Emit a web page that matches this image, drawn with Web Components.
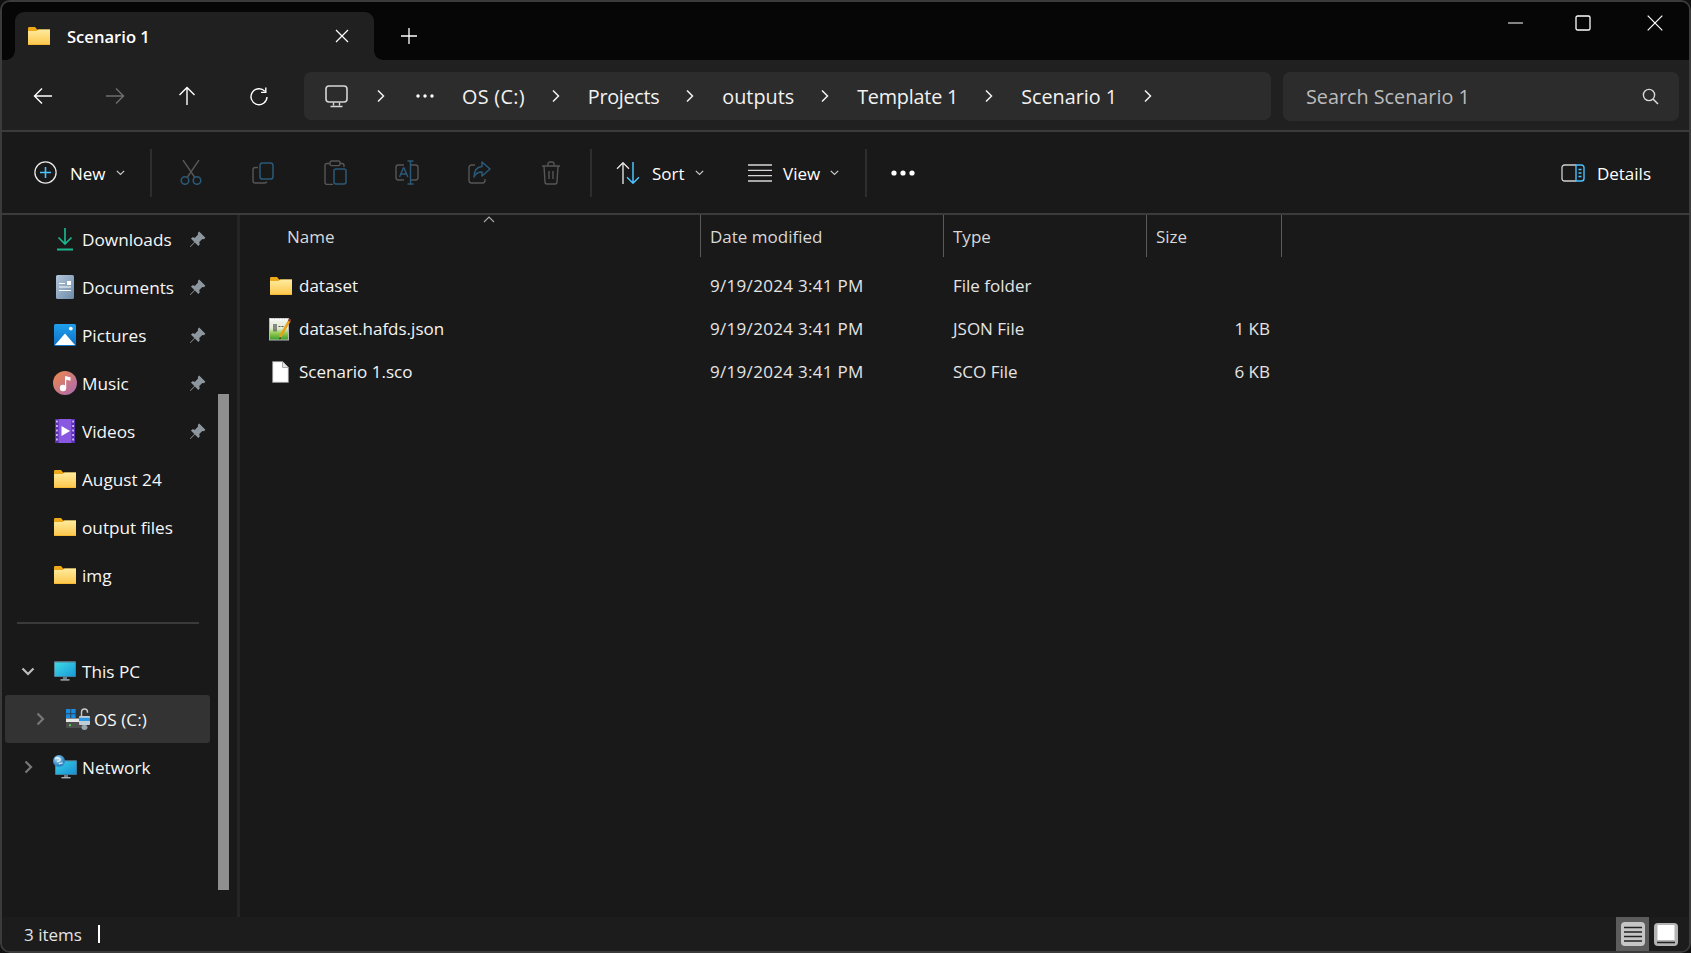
<!DOCTYPE html>
<html lang="en">
<head>
<meta charset="utf-8">
<title>Scenario 1 - File Explorer</title>
<style>
  html, body { margin: 0; height: 100%; background: #101010; }
  body { font-family: "Open Sans", "Noto Sans", sans-serif; font-size: 17px; color: #fff; overflow: hidden; }
</style>
</head>
<body>
<explorer-window>
  <tab-bar></tab-bar>
  <nav-bar>
    <path-crumb style="letter-spacing:.3px">OS (C:)</path-crumb>
    <path-crumb style="letter-spacing:-.3px">Projects</path-crumb>
    <path-crumb>outputs</path-crumb>
    <path-crumb style="letter-spacing:-.2px">Template 1</path-crumb>
    <path-crumb>Scenario 1</path-crumb>
  </nav-bar>
  <tool-bar></tool-bar>
  <main-area>
    <nav-pane slot="nav">
      <nav-item icon="download" pin>Downloads</nav-item>
      <nav-item icon="documents" pin>Documents</nav-item>
      <nav-item icon="pictures" pin>Pictures</nav-item>
      <nav-item icon="music" pin>Music</nav-item>
      <nav-item icon="videos" pin>Videos</nav-item>
      <nav-item icon="folder">August 24</nav-item>
      <nav-item icon="folder">output files</nav-item>
      <nav-item icon="folder">img</nav-item>
      <nav-divider></nav-divider>
      <nav-item icon="pc" chevron="down">This PC</nav-item>
      <nav-item icon="drive" chevron="right" level="1" selected>OS (C:)</nav-item>
      <nav-item icon="network" chevron="right">Network</nav-item>
    </nav-pane>
    <file-list slot="files">
      <file-row icon="folder" date="9/19/2024 3:41 PM" type="File folder" size="">dataset</file-row>
      <file-row icon="json" date="9/19/2024 3:41 PM" type="JSON File" size="1 KB">dataset.hafds.json</file-row>
      <file-row icon="sco" date="9/19/2024 3:41 PM" type="SCO File" size="6 KB">Scenario 1.sco</file-row>
    </file-list>
  </main-area>
  <status-bar></status-bar>
</explorer-window>

<script>
// shared colours for the greyed out toolbar icons
const DIM = "#565656";
const DIMBLUE = "#2b5a78";
const BLUE = "#4cc2ff";

const ICONS = {
  folder: [22, 18, `<defs><linearGradient id="g" x1="0" y1="0" x2="0" y2="1"><stop offset="0" stop-color="#ffeb9f"/><stop offset="1" stop-color="#fcc84e"/></linearGradient></defs>
    <path d="M0 1.2A1.2 1.2 0 0 1 1.2 0H7l2.2 2.4H22V18H0z" fill="#eea91a"/>
    <path d="M0 4H8.5L10.5 2.6H22V16.8a.8.8 0 0 1-.8.6H.8a.8.8 0 0 1-.8-.6z" fill="url(#g)"/>`],
  download: [18, 24, `<path d="M9 1V17M2.5 10.5 9 17l6.5-6.5" fill="none" stroke="#1db58d" stroke-width="1.7"/><path d="M1 22.5H17" stroke="#1db58d" stroke-width="2"/>`],
  documents: [18, 24, `<defs><linearGradient id="g" x1="0" y1="0" x2="1" y2="1"><stop offset="0" stop-color="#b4c6d9"/><stop offset="1" stop-color="#6c8ba9"/></linearGradient></defs>
    <rect width="18" height="24" rx="1.5" fill="url(#g)"/><path d="M3 8.5H9M3 12H15M3 15.5H15" stroke="#fff" stroke-width="1.1"/><rect x="11" y="6" width="4" height="4" fill="#fff"/>`],
  pictures: [22, 22, `<defs><linearGradient id="g" x1="0" y1="0" x2="0" y2="1"><stop offset="0" stop-color="#1f9fec"/><stop offset="1" stop-color="#0f70c6"/></linearGradient></defs>
    <rect width="22" height="22" rx="1.5" fill="url(#g)"/><circle cx="16.8" cy="4.6" r="1.9" fill="#fff"/><path d="M1 21 11 9.5 21 21z" fill="#fff"/>`],
  music: [24, 24, `<defs><linearGradient id="g" x1="0" y1="0" x2="1" y2="1"><stop offset="0" stop-color="#f08a46"/><stop offset="1" stop-color="#a868b8"/></linearGradient></defs>
    <circle cx="12" cy="12" r="12" fill="url(#g)"/><circle cx="10" cy="17" r="3.2" fill="#fff"/><path d="M12 17V5l5.5 1.2V9.8L13.2 8.8V17z" fill="#fff"/>`],
  videos: [20, 24, `<rect width="20" height="24" rx="1.5" fill="#8958e0"/><rect width="3.6" height="24" fill="#5a2fb0"/><rect x="16.4" width="3.6" height="24" fill="#5a2fb0"/>
    <path d="M1 2.5H2.8M1 7H2.8M1 11.5H2.8M1 16H2.8M1 20.5H2.8M17.2 2.5H19M17.2 7H19M17.2 11.5H19M17.2 16H19M17.2 20.5H19" stroke="#cdb8f4" stroke-width="2"/><path d="M6.5 7 15 12 6.5 17z" fill="#fff"/>`],
  pc: [22, 20, `<defs><linearGradient id="g" x1="0" y1="0" x2="1" y2="1"><stop offset="0" stop-color="#3ddbe6"/><stop offset="1" stop-color="#1a98d8"/></linearGradient></defs>
    <rect width="22" height="16" rx="1" fill="#5a6a76"/><rect x=".7" y="1.4" width="20.6" height="14" fill="url(#g)"/><path d="M9 16h4v2H9z" fill="#6f7c85"/><path d="M6.5 18.2h9v1.4h-9z" fill="#a9b3ba"/>`],
  drive: [24, 22, `<rect x="0" y="1" width="4.4" height="4.4" fill="#1a8ce0"/><rect x="5.2" y="1" width="4.4" height="4.4" fill="#1a8ce0"/><rect x="0" y="6.2" width="4.4" height="3.8" fill="#1a8ce0"/><rect x="5.2" y="6.2" width="4.4" height="3.8" fill="#1a8ce0"/>
    <rect x="0" y="10.5" width="17" height="3.5" fill="#e6e6e6"/><rect x="0" y="14" width="17" height="6" rx=".8" fill="#4d4d4d"/><rect x="3" y="16.2" width="2" height="2" fill="#52d24c"/>
    <path d="M15.5 8V4a3 3 0 0 1 6 0v.8" fill="none" stroke="#c9c9c9" stroke-width="1.4"/><rect x="13" y="8" width="11" height="9" rx="1" fill="#c0ccd6"/><rect x="13" y="9.8" width="11" height="3.2" fill="#2a97e6"/><rect x="15.5" y="17" width="6" height="5" rx="2.4" fill="#9aa4ac"/>`],
  network: [24, 24, `<defs><linearGradient id="g" x1="0" y1="0" x2="1" y2="1"><stop offset="0" stop-color="#36cfe6"/><stop offset="1" stop-color="#1a8fd2"/></linearGradient><radialGradient id="b" cx=".4" cy=".35"><stop offset="0" stop-color="#b4dcf4"/><stop offset="1" stop-color="#2e86c4"/></radialGradient></defs>
    <rect x="2" y="5" width="22" height="15" rx="1" fill="#4f6573"/><rect x="2.6" y="6.2" width="20.8" height="13.2" fill="url(#g)"/><path d="M11 20h4v2h-4z" fill="#6f7c85"/><path d="M8.5 22h9v1.4h-9z" fill="#a9b3ba"/>
    <circle cx="6" cy="6" r="6" fill="url(#b)"/><path d="M2 4c2-2 4-1 5 0s-1 3-3 2M6 9c1-1 3-1 4-1" fill="none" stroke="#e8f5fc" stroke-width="1.2"/>`],
  json: [23, 24, `<defs><linearGradient id="g" x1="0" y1="0" x2="0" y2="1"><stop offset="0" stop-color="#f2f4ee"/><stop offset=".45" stop-color="#e2ecd4"/><stop offset=".7" stop-color="#8fca4e"/><stop offset="1" stop-color="#38992a"/></linearGradient></defs>
    <rect x=".5" y="1.5" width="19" height="21.5" fill="url(#g)" stroke="#b8b8b8"/><path d="M1 2.5H19" stroke="#fff" stroke-width="2" stroke-dasharray="1.5 1"/><path d="M5 7v7.5M7 7v7.5" stroke="#3a3a3a" stroke-width="1.1"/><path d="M9.5 9.5H15" stroke="#555" stroke-width="1.2" stroke-dasharray="2 1"/>
    <path d="M11 20 20.5 3.5" stroke="#e8a21d" stroke-width="2.6"/><path d="M20 4.4l1.2-2.2" stroke="#8c3d2c" stroke-width="2.6"/><path d="M11 20l-1 2.6 2.4-1.4z" fill="#333"/>`],
  sco: [17, 22, `<path d="M.6.6H10.5L16.4 6.5V21.4H.6z" fill="#fff" stroke="#8a8a8a"/><path d="M10.5.6V6.5H16.4" fill="#e3e3e3" stroke="#9a9a9a" stroke-width=".8"/>`],
  pin: [17, 17, `<path d="M10.2.6 16.4 6.8 15 8.2 13.4 7.9 10.3 11 10.7 13.6 9.3 15 5.9 11.6 1.4 16.1.9 15.6 5.4 11.1 2 7.7 3.4 6.3 6 6.7 9.1 3.6 8.8 2z" fill="#8e969d"/>`],
  chevdown: [14, 9, `<path d="M1.5 1.5 7 7l5.5-5.5" fill="none" stroke="#bdbdbd" stroke-width="2.2"/>`],
  chevright: [9, 14, `<path d="M1.5 1.5 7 7l-5.5 5.5" fill="none" stroke="#777" stroke-width="2.2"/>`],
  crumbchev: [10, 14, `<path d="M2 1.5 7.5 7 2 12.5" fill="none" stroke="#f2f2f2" stroke-width="1.5"/>`],
  close: [14, 14, `<path d="M1 1 13 13M13 1 1 13" stroke="#fff" stroke-width="1.2"/>`],
  plus: [16, 16, `<path d="M8 0V16M0 8H16" stroke="#fff" stroke-width="1.3"/>`],
  min: [15, 2, `<path d="M0 1H15" stroke="#fff" stroke-width="1.1"/>`],
  max: [16, 16, `<rect x="1" y="1" width="14" height="14" rx="1.6" fill="none" stroke="#fff" stroke-width="1.3"/>`],
  winclose: [16, 16, `<path d="M.7.7 15.3 15.3M15.3.7.7 15.3" stroke="#fff" stroke-width="1.2"/>`],
  back: [20, 18, `<path d="M19 9H1.5M9 1.5 1.5 9 9 16.5" fill="none" stroke="#fff" stroke-width="1.4"/>`],
  forward: [20, 18, `<path d="M1 9H18.5M11 1.5 18.5 9 11 16.5" fill="none" stroke="#6e6e6e" stroke-width="1.4"/>`],
  up: [18, 20, `<path d="M9 19V1.5M1.5 9 9 1.5 16.5 9" fill="none" stroke="#fff" stroke-width="1.4"/>`],
  refresh: [18, 19, `<path d="M15 4.4A8 8 0 1 0 17 10" fill="none" stroke="#fff" stroke-width="1.4"/><path d="M15.8.6V5.4H11" fill="none" stroke="#fff" stroke-width="1.4"/>`],
  monitor: [23, 23, `<rect x="1" y="1" width="21" height="16" rx="3" fill="none" stroke="#d6d6d6" stroke-width="1.6"/><path d="M8.5 17.5v3M14.5 17.5v3M5.5 21.5H17.5" stroke="#d6d6d6" stroke-width="1.4"/>`],
  dots: [18, 4, `<circle cx="2" cy="2" r="1.7" fill="#fff"/><circle cx="9" cy="2" r="1.7" fill="#fff"/><circle cx="16" cy="2" r="1.7" fill="#fff"/>`],
  search: [17, 17, `<circle cx="7" cy="7" r="5.6" fill="none" stroke="#d8d8d8" stroke-width="1.4"/><path d="M11 11 16 16" stroke="#d8d8d8" stroke-width="1.6"/>`],
  new: [23, 23, `<circle cx="11.5" cy="11.5" r="10.6" fill="none" stroke="#e8e8e8" stroke-width="1.3"/><path d="M11.5 6V17M6 11.5H17" stroke="${BLUE}" stroke-width="1.6"/>`],
  cut: [22, 25, `<path d="M3 0 14.5 17M19 0 7.5 17" stroke="${DIM}" stroke-width="1.4"/><circle cx="5" cy="20.5" r="3.8" fill="none" stroke="${DIMBLUE}" stroke-width="1.5"/><circle cx="17" cy="20.5" r="3.8" fill="none" stroke="${DIMBLUE}" stroke-width="1.5"/>`],
  copy: [22, 22, `<path d="M6 5.5H3.2A2.2 2.2 0 0 0 1 7.7v11.1A2.2 2.2 0 0 0 3.2 21h9.6a2.2 2.2 0 0 0 2-1.5" fill="none" stroke="${DIM}" stroke-width="1.4"/><rect x="8" y="1" width="13" height="16" rx="2.6" fill="none" stroke="${DIMBLUE}" stroke-width="1.5"/>`],
  paste: [23, 25, `<path d="M6 3.5H3A2 2 0 0 0 1 5.5v17A2 2 0 0 0 3 24.5h6M16 3.5h2a2 2 0 0 1 2 2V7" fill="none" stroke="${DIM}" stroke-width="1.4"/><rect x="6" y="1" width="10" height="4.6" rx="1.6" fill="none" stroke="${DIM}" stroke-width="1.4"/><rect x="10" y="9" width="12" height="15" rx="2" fill="none" stroke="${DIMBLUE}" stroke-width="1.5"/>`],
  rename: [24, 25, `<path d="M9 5H3A2.4 2.4 0 0 0 1 7.4v10.2A2.4 2.4 0 0 0 3.4 20H9M16 5h4.6A2.4 2.4 0 0 1 23 7.4v10.2a2.4 2.4 0 0 1-2.4 2.4H16" fill="none" stroke="${DIM}" stroke-width="1.4"/><path d="M4.5 17 8.4 8h.6l3.9 9M6 14h5.4" fill="none" stroke="${DIMBLUE}" stroke-width="1.4"/><path d="M15.5 1V24M12.5 1H18.5M12.5 24H18.5" stroke="${DIMBLUE}" stroke-width="1.5"/>`],
  share: [23, 23, `<path d="M7 4H3.4A2.4 2.4 0 0 0 1 6.4v13.2A2.4 2.4 0 0 0 3.4 22h11.2a2.4 2.4 0 0 0 2.4-2.4V18" fill="none" stroke="${DIM}" stroke-width="1.4"/><path d="M14 1 22 8 14 15V11C10 11 7.5 12.5 6 16c0-6 3-10 8-10.5z" fill="none" stroke="${DIMBLUE}" stroke-width="1.5" stroke-linejoin="round"/>`],
  trash: [20, 24, `<path d="M1 5H19M7 5V3A2 2 0 0 1 9 1h2a2 2 0 0 1 2 2V5M3 5 4 21a2 2 0 0 0 2 2h8a2 2 0 0 0 2-2L17 5M8 10v8M12 10v8" fill="none" stroke="${DIM}" stroke-width="1.4"/>`],
  sort: [24, 24, `<path d="M7 23V1.8M1 7.8 7 1.8l6 6" fill="none" stroke="#e0e0e0" stroke-width="1.4"/><path d="M17 1V22.2M11 16.2l6 6 6-6" fill="none" stroke="${BLUE}" stroke-width="1.5"/>`],
  view: [24, 18, `<path d="M0 1H24M0 6.3H24M0 11.6H24M0 17H24" stroke="#d6d6d6" stroke-width="1.3"/>`],
  more: [24, 6, `<circle cx="3" cy="3" r="2.6" fill="#fff"/><circle cx="12" cy="3" r="2.6" fill="#fff"/><circle cx="21" cy="3" r="2.6" fill="#fff"/>`],
  details: [24, 18, `<path d="M15 1H3.5A2.5 2.5 0 0 0 1 3.5v11A2.5 2.5 0 0 0 3.5 17H15" fill="none" stroke="#d0d0d0" stroke-width="1.3"/><path d="M15 1h5.5A2.5 2.5 0 0 1 23 3.5v11a2.5 2.5 0 0 1-2.5 2.5H15z" fill="none" stroke="${BLUE}" stroke-width="1.4"/><path d="M17.5 5.5h3M17.5 9h3M17.5 12.5h3" stroke="${BLUE}" stroke-width="1.3"/>`],
  menuchev: [9, 6, `<path d="M.8.8 4.5 4.5 8.2.8" fill="none" stroke="#c8c8c8" stroke-width="1.2"/>`],
  sortcaret: [12, 7, `<path d="M1 6 6 1l5 5" fill="none" stroke="#a8a8a8" stroke-width="1.1"/>`],
  viewlist: [24, 24, `<rect width="24" height="24" rx="4" fill="#c6c6c6"/><path d="M3 5.5H21M3 10H21M3 14.5H21M3 19H21" stroke="#222" stroke-width="1.3"/>`],
  viewthumb: [24, 23, `<rect width="24" height="23" rx="4" fill="#b4b4b4"/><rect x="3.5" y="2" width="17" height="15" fill="#fff"/><path d="M3 19.5H21" stroke="#222" stroke-width="1.3"/>`],
};

class AppIcon extends HTMLElement {
  constructor() {
    super();
    this.attachShadow({ mode: "open" });
  }

  connectedCallback() {
    const [w, h, body] = ICONS[this.getAttribute("name")];
    this.shadowRoot.innerHTML = /* html */`
    <style>:host { display: block; flex: none; width: ${w}px; height: ${h}px; } svg { display: block; }</style>
    <svg xmlns="http://www.w3.org/2000/svg" width="${w}" height="${h}" viewBox="0 0 ${w} ${h}">${body}</svg>
    `;
  }
}

class ExplorerWindow extends HTMLElement {
  constructor() {
    super();
    this.attachShadow({ mode: "open" });
  }

  connectedCallback() {
    this.shadowRoot.innerHTML = /* html */`
    <style>
      :host {
        display: grid;
        grid-template-rows: 58px 72px 83px minmax(0, 1fr) 34px;
        box-sizing: border-box;
        height: 953px;
        border: 2px solid #3b3b3b;
        border-radius: 10px;
        background: #191919;
        overflow: hidden;
      }
    </style>
    <slot></slot>
    `;
  }
}

class TabBar extends HTMLElement {
  constructor() {
    super();
    this.attachShadow({ mode: "open" });
  }

  static get styles() {
    return /* css */`
      :host {
        display: flex;
        align-items: flex-end;
        padding-left: 13px;
        background: #060606;
        position: relative;
      }

      .tab {
        display: flex;
        align-items: center;
        box-sizing: border-box;
        width: 359px;
        height: 48px;
        padding-left: 13px;
        background: #202020;
        border-radius: 9px 9px 0 0;
        position: relative;
      }

      .tab::before, .tab::after {
        content: "";
        position: absolute;
        bottom: 0;
        width: 9px;
        height: 9px;
      }

      .tab::before {
        left: -9px;
        background: radial-gradient(circle at 0 0, transparent 8.5px, #202020 9px);
      }

      .tab::after {
        right: -9px;
        background: radial-gradient(circle at 100% 0, transparent 8.5px, #202020 9px);
      }

      .title {
        margin-left: 17px;
        font-size: 16.6px;
        font-weight: 600;
      }

      .tab-close {
        margin-left: auto;
        margin-right: 25px;
      }

      .new-tab {
        margin: 0 0 16px 27px;
      }

      .caption {
        display: flex;
        align-items: center;
        margin: 0 0 auto auto;
        height: 42px;
      }

      .caption app-icon:nth-child(1) { margin-right: 52px; }
      .caption app-icon:nth-child(2) { margin-right: 56px; }
      .caption app-icon:nth-child(3) { margin-right: 26px; }
    `;
  }

  connectedCallback() {
    this.shadowRoot.innerHTML = /* html */`
    <style>${TabBar.styles}</style>
    <div class="tab">
      <app-icon name="folder"></app-icon>
      <span class="title">Scenario 1</span>
      <app-icon class="tab-close" name="close"></app-icon>
    </div>
    <app-icon class="new-tab" name="plus"></app-icon>
    <div class="caption">
      <app-icon name="min"></app-icon>
      <app-icon name="max"></app-icon>
      <app-icon name="winclose"></app-icon>
    </div>
    `;
  }
}

class NavBar extends HTMLElement {
  constructor() {
    super();
    this.attachShadow({ mode: "open" });
  }

  static get styles() {
    return /* css */`
      :host {
        display: flex;
        align-items: center;
        box-sizing: border-box;
        padding: 2px 10px 0 0;
        background: #202020;
        border-bottom: 2px solid #3b3b3b;
      }

      .arrows {
        display: flex;
        align-items: center;
        width: 302px;
        flex: none;
      }

      .arrows app-icon { margin-left: 52px; }
      .arrows app-icon:first-child { margin-left: 31px; }
      .arrows app-icon:nth-child(3) { margin-left: 53px; }
      .arrows app-icon:nth-child(4) { margin-left: 54px; }

      .path {
        display: flex;
        align-items: center;
        box-sizing: border-box;
        width: 967px;
        height: 48px;
        padding-left: 21px;
        background: #2c2c2c;
        border-radius: 7px;
        font-size: 19.8px;
        color: #f2f2f2;
      }

      .root-chev { margin: 0 0 0 28px; }
      .root-dots { margin: 0 28px 0 30px; }

      .search {
        display: flex;
        align-items: center;
        box-sizing: border-box;
        width: 396px;
        height: 49px;
        margin-left: 12px;
        padding: 0 20px 0 23px;
        background: #2c2c2c;
        border-radius: 7px;
        font-size: 19.8px;
        color: #bcbcbc;
      }

      .search app-icon { margin-left: auto; }
    `;
  }

  connectedCallback() {
    this.shadowRoot.innerHTML = /* html */`
    <style>${NavBar.styles}</style>
    <div class="arrows">
      <app-icon name="back"></app-icon>
      <app-icon name="forward"></app-icon>
      <app-icon name="up"></app-icon>
      <app-icon name="refresh"></app-icon>
    </div>
    <div class="path">
      <app-icon name="monitor"></app-icon>
      <app-icon class="root-chev" name="crumbchev"></app-icon>
      <app-icon class="root-dots" name="dots"></app-icon>
      <slot></slot>
    </div>
    <div class="search">
      <span>Search Scenario 1</span>
      <app-icon name="search"></app-icon>
    </div>
    `;
  }
}

class PathCrumb extends HTMLElement {
  constructor() {
    super();
    this.attachShadow({ mode: "open" });
  }

  connectedCallback() {
    this.shadowRoot.innerHTML = /* html */`
    <style>
      :host { display: flex; align-items: center; flex: none; }
      app-icon { margin: 0 27px 0 26px; }
    </style>
    <slot></slot>
    <app-icon name="crumbchev"></app-icon>
    `;
  }
}

class ToolBtn extends HTMLElement {
  constructor() {
    super();
    this.attachShadow({ mode: "open" });
  }

  connectedCallback() {
    const label = this.getAttribute("label");
    const chevron = this.hasAttribute("chevron") ? `<app-icon class="chev" name="menuchev"></app-icon>` : "";
    this.shadowRoot.innerHTML = /* html */`
    <style>
      :host {
        display: flex;
        align-items: center;
        flex: none;
        box-sizing: border-box;
        width: var(--w, 72px);
        padding-left: var(--pad, 0);
        justify-content: var(--justify, center);
      }
      span { margin-left: var(--gap, 12px); padding-top: 2px; }
      .chev { margin-left: var(--chev, 10px); }
    </style>
    <app-icon name="${this.getAttribute("icon")}"></app-icon>
    ${label ? `<span>${label}</span>` : ""}
    ${chevron}
    `;
  }
}

class ToolBar extends HTMLElement {
  constructor() {
    super();
    this.attachShadow({ mode: "open" });
  }

  static get styles() {
    return /* css */`
      :host {
        display: flex;
        align-items: center;
        box-sizing: border-box;
        background: #191919;
        border-bottom: 2px solid #3b3b3b;
        font-size: 17px;
      }

      .sep {
        flex: none;
        width: 2px;
        height: 48px;
        background: #2e2e2e;
      }

      .icons {
        display: flex;
        margin: 0 3px;
      }

      .end {
        margin-left: auto;
        padding-right: 38px;
      }
    `;
  }

  connectedCallback() {
    this.shadowRoot.innerHTML = /* html */`
    <style>${ToolBar.styles}</style>
    <tool-btn icon="new" label="New" chevron style="--w:148px;--pad:32px;--justify:flex-start;--gap:13px"></tool-btn>
    <div class="sep"></div>
    <div class="icons">
      <tool-btn icon="cut"></tool-btn>
      <tool-btn icon="copy"></tool-btn>
      <tool-btn icon="paste"></tool-btn>
      <tool-btn icon="rename"></tool-btn>
      <tool-btn icon="share"></tool-btn>
      <tool-btn icon="trash"></tool-btn>
    </div>
    <div class="sep"></div>
    <tool-btn icon="sort" label="Sort" chevron style="--w:132px;--pad:24px;--justify:flex-start;--gap:12px"></tool-btn>
    <tool-btn icon="view" label="View" chevron style="--w:141px;--pad:24px;--justify:flex-start;--gap:11px"></tool-btn>
    <div class="sep"></div>
    <tool-btn icon="more" style="--w:72px"></tool-btn>
    <div class="end">
      <tool-btn icon="details" label="Details" style="--w:auto"></tool-btn>
    </div>
    `;
  }
}

class MainArea extends HTMLElement {
  constructor() {
    super();
    this.attachShadow({ mode: "open" });
  }

  connectedCallback() {
    this.shadowRoot.innerHTML = /* html */`
    <style>
      :host { display: grid; grid-template-columns: 238px minmax(0, 1fr); min-height: 0; background: #191919; }
    </style>
    <slot name="nav"></slot>
    <slot name="files"></slot>
    `;
  }
}

class NavPane extends HTMLElement {
  constructor() {
    super();
    this.attachShadow({ mode: "open" });
  }

  static get styles() {
    return /* css */`
      :host {
        display: block;
        box-sizing: border-box;
        border-right: 3px solid #252525;
        position: relative;
        overflow: hidden;
        font-size: 17.2px;
      }

      .scroll-thumb {
        position: absolute;
        top: 179px;
        left: 216px;
        width: 11px;
        height: 496px;
        background: #8f8f8f;
      }
    `;
  }

  connectedCallback() {
    this.shadowRoot.innerHTML = /* html */`
    <style>${NavPane.styles}</style>
    <slot></slot>
    <div class="scroll-thumb"></div>
    `;
  }
}

class NavDivider extends HTMLElement {
  constructor() {
    super();
    this.attachShadow({ mode: "open" });
  }

  connectedCallback() {
    this.shadowRoot.innerHTML = /* html */`
    <style>:host { display: block; height: 2px; margin: 23px 38px 23px 15px; background: #3a3a3a; }</style>
    `;
  }
}

class NavItem extends HTMLElement {
  constructor() {
    super();
    this.attachShadow({ mode: "open" });
  }

  static get styles() {
    return /* css */`
      :host {
        display: flex;
        align-items: center;
        box-sizing: border-box;
        height: 48px;
        padding-right: 31px;
      }

      :host([selected]) {
        margin: 0 27px 0 3px;
        border-radius: 3px;
        background: #333;
        padding-right: 0;
      }

      :host([selected]) .chev { margin-left: -3px; }

      .chev {
        display: flex;
        align-items: center;
        justify-content: center;
        flex: none;
        width: 52px;
      }

      .label { margin-left: 6px; color: #f6f6f6; }

      .pin { margin-left: auto; }

      .holder {
        display: flex;
        align-items: center;
        justify-content: center;
        flex: none;
        width: 22px;
      }

      :host([level="1"]) .holder { margin-left: 13px; }
      :host([level="1"]) .label { margin-left: 5px; }
      :host([level="1"]) .chev { transform: translateX(12px); }
    `;
  }

  connectedCallback() {
    const chevron = this.getAttribute("chevron");
    const chev = chevron ? `<app-icon name="${chevron === "down" ? "chevdown" : "chevright"}"></app-icon>` : "";
    const pin = this.hasAttribute("pin") ? `<app-icon class="pin" name="pin"></app-icon>` : "";
    this.shadowRoot.innerHTML = /* html */`
    <style>${NavItem.styles}</style>
    <div class="chev">${chev}</div>
    <div class="holder"><app-icon name="${this.getAttribute("icon")}"></app-icon></div>
    <span class="label"><slot></slot></span>
    ${pin}
    `;
  }
}

class FileList extends HTMLElement {
  constructor() {
    super();
    this.attachShadow({ mode: "open" });
  }

  static get styles() {
    return /* css */`
      :host {
        display: block;
        --cols: 461px 243px 203px 135px;
        color: #e4e4e4;
      }

      .head {
        display: grid;
        grid-template-columns: var(--cols);
        justify-content: start;
        height: 42px;
        margin-bottom: 7px;
        position: relative;
        color: #d8d8d8;
      }

      .cell {
        display: flex;
        align-items: center;
        box-sizing: border-box;
        padding-left: 9px;
        border-right: 1px solid #5a5a5a;
      }

      .cell.name { padding-left: 47px; }

      .caret {
        position: absolute;
        left: 243px;
        top: 1px;
      }
    `;
  }

  connectedCallback() {
    this.shadowRoot.innerHTML = /* html */`
    <style>${FileList.styles}</style>
    <div class="head">
      <div class="cell name">Name</div>
      <div class="cell">Date modified</div>
      <div class="cell">Type</div>
      <div class="cell">Size</div>
      <app-icon class="caret" name="sortcaret"></app-icon>
    </div>
    <slot></slot>
    `;
  }
}

class FileRow extends HTMLElement {
  constructor() {
    super();
    this.attachShadow({ mode: "open" });
  }

  static get styles() {
    return /* css */`
      :host {
        display: grid;
        grid-template-columns: var(--cols);
        justify-content: start;
        align-items: center;
        height: 43px;
      }

      .name {
        display: flex;
        align-items: center;
        padding-left: 29px;
        color: #f4f4f4;
      }

      .holder {
        display: flex;
        justify-content: center;
        width: 23px;
        margin-right: 7px;
      }

      .date, .type { padding-left: 9px; }

      .date { letter-spacing: .3px; }

      .size { text-align: right; padding-right: 12px; }
    `;
  }

  connectedCallback() {
    const attr = n => this.getAttribute(n);
    this.shadowRoot.innerHTML = /* html */`
    <style>${FileRow.styles}</style>
    <div class="name"><div class="holder"><app-icon name="${attr("icon")}"></app-icon></div><slot></slot></div>
    <div class="date">${attr("date")}</div>
    <div class="type">${attr("type")}</div>
    <div class="size">${attr("size")}</div>
    `;
  }
}

class StatusBar extends HTMLElement {
  constructor() {
    super();
    this.attachShadow({ mode: "open" });
  }

  static get styles() {
    return /* css */`
      :host {
        display: flex;
        align-items: center;
        padding-left: 22px;
        background: #1c1c1c;
        color: #e4e4e4;
      }

      .caret {
        width: 2px;
        height: 18px;
        margin-left: 16px;
        background: #fff;
      }

      .views {
        display: flex;
        align-items: center;
        align-self: stretch;
        margin-left: auto;
        margin-right: 11px;
      }

      .on {
        display: flex;
        align-items: center;
        justify-content: center;
        width: 33px;
        height: 34px;
        margin-right: 5px;
        background: #5c5c5c;
      }
    `;
  }

  connectedCallback() {
    this.shadowRoot.innerHTML = /* html */`
    <style>${StatusBar.styles}</style>
    <span>3 items</span>
    <div class="caret"></div>
    <div class="views">
      <div class="on"><app-icon name="viewlist"></app-icon></div>
      <app-icon name="viewthumb"></app-icon>
    </div>
    `;
  }
}

customElements.define("app-icon", AppIcon);
customElements.define("explorer-window", ExplorerWindow);
customElements.define("tab-bar", TabBar);
customElements.define("nav-bar", NavBar);
customElements.define("path-crumb", PathCrumb);
customElements.define("tool-btn", ToolBtn);
customElements.define("tool-bar", ToolBar);
customElements.define("main-area", MainArea);
customElements.define("nav-pane", NavPane);
customElements.define("nav-divider", NavDivider);
customElements.define("nav-item", NavItem);
customElements.define("file-list", FileList);
customElements.define("file-row", FileRow);
customElements.define("status-bar", StatusBar);
</script>
</body>
</html>
